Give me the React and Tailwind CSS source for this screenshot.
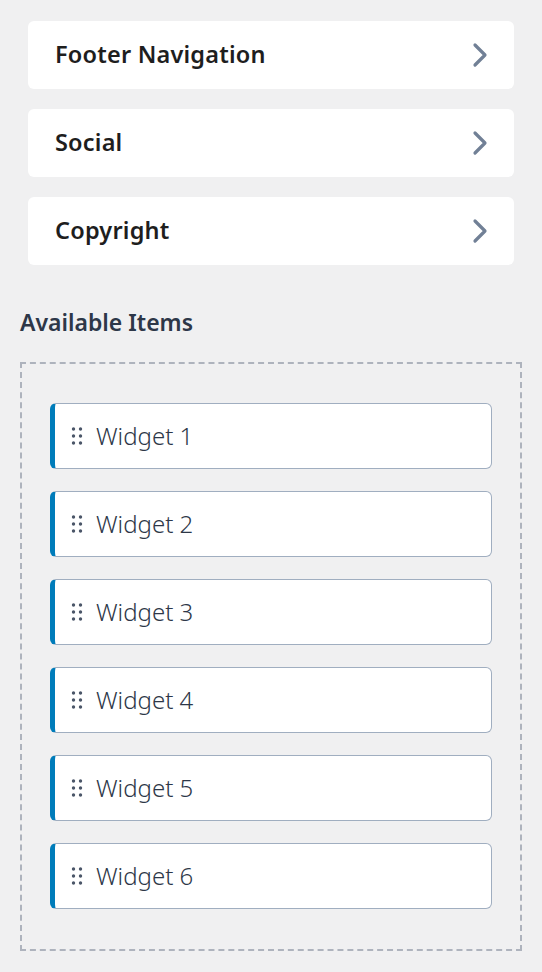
import React from "react";

const font = { fontFamily: '"Noto Sans", "Open Sans", sans-serif' };

function Chevron() {
  return (
    <svg width="18" height="28" viewBox="0 0 18 28" fill="none">
      <path d="M4 4 L14 14 L4 24" stroke="#718096" strokeWidth="3.2" strokeLinecap="round" strokeLinejoin="round" />
    </svg>
  );
}

function Dots() {
  return (
    <svg width="12" height="20" viewBox="0 0 12 20" fill="#4a5568">
      <circle cx="2.5" cy="3" r="1.7" />
      <circle cx="9.5" cy="3" r="1.7" />
      <circle cx="2.5" cy="10" r="1.7" />
      <circle cx="9.5" cy="10" r="1.7" />
      <circle cx="2.5" cy="17" r="1.7" />
      <circle cx="9.5" cy="17" r="1.7" />
    </svg>
  );
}

export default function App() {
  const sections = ["Footer Navigation", "Social", "Copyright"];
  const widgets = [1, 2, 3, 4, 5, 6];
  return (
    <div className="min-h-[972px] w-[542px] bg-[#f0f0f1] px-5 pt-[21px]" style={font}>
      <div className="flex flex-col gap-5 px-2">
        {sections.map((s) => (
          <div key={s} className="flex h-[68px] items-center justify-between rounded-md bg-white pl-[27px] pr-[25px]">
            <span className="text-[23.5px] font-semibold tracking-[0.2px] text-[#1e1e1e]">{s}</span>
            <Chevron />
          </div>
        ))}
      </div>
      <h2 className="mt-[42px] text-[23px] font-semibold leading-[30px] text-[#2d3748]">Available Items</h2>
      <div className="mt-[25px] flex h-[589px] flex-col gap-[22px] border-2 border-dashed border-[#aeb3bd] px-[28px] pt-[39px]">
        {widgets.map((w) => (
          <div key={w} className="flex h-[66px] items-center gap-[13px] rounded-[6px] border-[1.5px] border-l-[5px] border-[#a0aec0] border-l-[#007cba] bg-white pl-[16px]">
            <Dots />
            <span className="text-[24px] font-light text-[#2d3748]">Widget {w}</span>
          </div>
        ))}
      </div>
    </div>
  );
}
